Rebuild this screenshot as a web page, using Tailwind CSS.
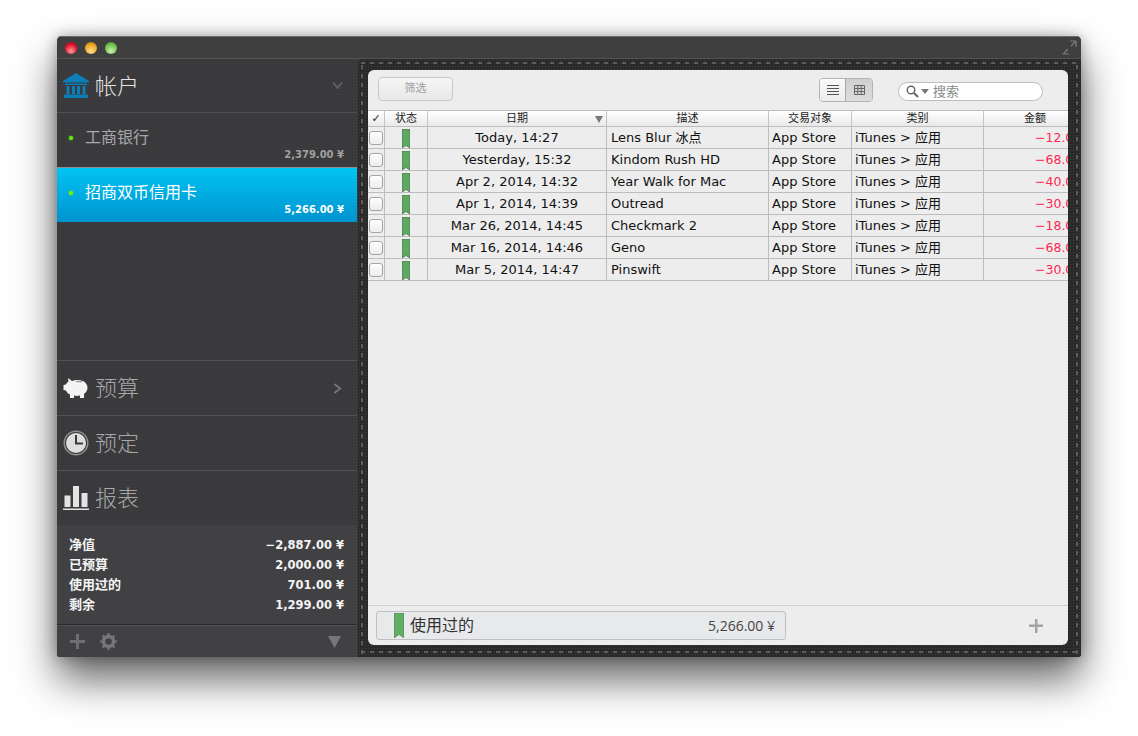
<!DOCTYPE html>
<html lang="zh">
<head>
  <meta charset="UTF-8">
  <title>帐户</title>
  <script src="https://cdn.jsdelivr.net/npm/@tailwindcss/browser@4"></script>
</head>
<body class="bg-white h-[736px] overflow-hidden font-['DejaVu_Sans','Noto_Sans_CJK_SC',sans-serif]">

  <!-- Window -->
  <div class="ml-[57px] mt-[36px] w-[1024px] h-[621px] rounded-t-[5px] rounded-b-[3px] bg-[#3b3b3d] flex flex-col overflow-hidden shadow-[0_22px_42px_rgba(0,0,0,0.62),0_0_14px_rgba(0,0,0,0.3)]">

    <!-- Title bar -->
    <div class="h-[23px] shrink-0 bg-[#3f3f3f] border-t border-[#6a6a6a] border-b border-b-[#545454] flex items-center pl-[8px] pr-[4px] gap-[8px]">
      <span class="w-[12px] h-[12px] rounded-full bg-[radial-gradient(circle_at_50%_75%,#ff9a9a,#e0102a_60%,#a00818)]"></span>
      <span class="w-[12px] h-[12px] rounded-full bg-[radial-gradient(circle_at_50%_75%,#ffe090,#eca422_60%,#b07408)]"></span>
      <span class="w-[12px] h-[12px] rounded-full bg-[radial-gradient(circle_at_50%_75%,#c8f0a8,#72c050_60%,#408a28)]"></span>
      <svg class="ml-auto" width="15" height="15" viewBox="0 0 15 15" fill="none" stroke="#7c7c7c" stroke-width="1.2">
        <path d="M1 14h6M1 14v-1M14 1H8M14 1v6M13.500 1.500L9 6M6 9l-4 4"/>
      </svg>
    </div>

    <div class="flex flex-1 min-h-0">

      <!-- Sidebar -->
      <aside class="w-[300px] shrink-0 flex flex-col bg-[repeating-linear-gradient(0deg,#39393c_0_1px,#3b3b3e_1px_3px)]">
        <div class="h-[54px] shrink-0 flex items-center pl-[6px] pr-[14px] border-b border-[#515153]">
          <svg width="26" height="25" viewBox="0 0 26 25" fill="#0d7fb8">
            <path d="M13 0L26 8v1.500H0V8zM2 10.500h22V12H2zM3.500 13h3v8h-3zM9 13h3v8H9zM14 13h3v8h-3zM19.500 13h3v8h-3zM1 21.500h24V25H1z"/>
          </svg>
          <span class="ml-[6px] mt-[3px] text-[22px] leading-[30px] font-light text-[#e4e4e4]">帐户</span>
          <svg class="ml-auto" width="11" height="9" viewBox="0 0 12 10" fill="none" stroke="#626265" stroke-width="2">
            <path d="M1 1.500L6 7.500 11 1.500"/>
          </svg>
        </div>

        <div class="h-[55px] shrink-0 flex flex-col pl-[12px] pr-[13px] border-b border-[#8a8f94]">
          <div class="flex items-center mt-[15px] h-[20px]">
            <span class="w-[4px] h-[4px] rounded-full bg-[#5cf000] shadow-[0_0_2px_#5cf000]"></span>
            <span class="ml-[12px] text-[16px] leading-[20px] text-[#a8a8a8]">工商银行</span>
          </div>
          <div class="text-right text-[10px] leading-[14px] font-bold text-[#a0a0a0]">2,379.00 ¥</div>
        </div>

        <div class="h-[54px] shrink-0 flex flex-col pl-[12px] pr-[13px] bg-gradient-to-b from-[#00c4f2] to-[#0093cf]">
          <div class="flex items-center mt-[15px] h-[20px]">
            <span class="w-[4px] h-[4px] rounded-full bg-[#7cf000] shadow-[0_0_2px_#7cf000]"></span>
            <span class="ml-[12px] text-[16px] leading-[20px] text-white">招商双币信用卡</span>
          </div>
          <div class="text-right text-[10px] leading-[14px] font-bold text-white">5,266.00 ¥</div>
        </div>

        <div class="flex-1 border-b border-[#515153]"></div>

        <div class="h-[55px] shrink-0 flex items-center pl-[6px] pr-[15px] border-b border-[#515153]">
          <svg width="26" height="22" viewBox="0 0 26 22" fill="#f4f4f4">
            <path d="M5 1l4 3c3-1.500 8-1.500 11 0 3 1.500 4.500 4 4.500 6.500 0 3-1.500 5-3.500 6.500V21h-4v-2.500c-2 .5-4 .5-6 0V21H7v-3.500C5 16.500 3.500 15 3 13.500L.5 13V8L3 7.500C3.500 6 4.500 5 5.500 4.500z"/>
            <path d="M13 4.500h6" stroke="#9a9a9a" stroke-width="1.500"/>
          </svg>
          <span class="ml-[6px] mt-[1px] text-[22px] leading-[30px] font-light text-[#a8a8a8]">预算</span>
          <svg class="ml-auto" width="9" height="11" viewBox="0 0 10 12" fill="none" stroke="#77777a" stroke-width="2">
            <path d="M1.500 1L8 6 1.500 11"/>
          </svg>
        </div>

        <div class="h-[55px] shrink-0 flex items-center pl-[6px] border-b border-[#515153]">
          <svg width="26" height="26" viewBox="0 0 26 26">
            <circle cx="13" cy="13" r="12.500" fill="#8e8e8e"/>
            <circle cx="13" cy="13" r="11" fill="#3c3c3e"/>
            <circle cx="13" cy="13" r="10" fill="#dedede"/>
            <path d="M13 5v8.500h7" fill="none" stroke="#3a3a3a" stroke-width="2"/>
          </svg>
          <span class="ml-[6px] mt-[1px] text-[22px] leading-[30px] font-light text-[#a8a8a8]">预定</span>
        </div>

        <div class="h-[54px] shrink-0 flex items-center pl-[6px]">
          <svg width="26" height="26" viewBox="0 0 26 26" fill="#e4e4e4">
            <path d="M1.500 10.500h6V22h-6zM10 1h6v21h-6zM18.500 8h6v14h-6zM0 23.500h26V25H0z"/>
          </svg>
          <span class="ml-[6px] mt-[1px] text-[22px] leading-[30px] font-light text-[#a8a8a8]">报表</span>
        </div>

        <!-- Summary -->
        <div class="h-[100px] shrink-0 bg-[#414144] pl-[12px] pr-[13px] pt-[10px] border-b border-[#29292b] text-[13px] font-bold text-[#f4f4f4] leading-[20px]">
          <div class="flex justify-between"><span>净值</span><span class="text-[11.500px]">−2,887.00 ¥</span></div>
          <div class="flex justify-between"><span>已预算</span><span class="text-[11.500px]">2,000.00 ¥</span></div>
          <div class="flex justify-between"><span>使用过的</span><span class="text-[11.500px]">701.00 ¥</span></div>
          <div class="flex justify-between"><span>剩余</span><span class="text-[11.500px]">1,299.00 ¥</span></div>
        </div>

        <!-- Sidebar footer -->
        <div class="h-[32px] shrink-0 bg-[#414144] border-t border-[#515153] flex items-center pl-[13px] pr-[16px]">
          <svg width="15" height="15" viewBox="0 0 15 15" fill="#6f6f72"><path d="M6 0h3v6h6v3H9v6H6V9H0V6h6z"/></svg>
          <svg class="ml-[15px]" width="17" height="17" viewBox="0 0 17 17">
            <circle cx="8.500" cy="8.500" r="5" fill="none" stroke="#77777a" stroke-width="3.500"/>
            <path d="M8.500 0v17M0 8.500h17M2.500 2.500l12 12M14.500 2.500l-12 12" stroke="#77777a" stroke-width="2.200" stroke-dasharray="3 11"/>
          </svg>
          <svg class="ml-auto" width="13" height="12" viewBox="0 0 13 12" fill="#77777a"><path d="M0 0h13L6.500 12z"/></svg>
        </div>
      </aside>

      <!-- Leather frame -->
      <main class="relative flex-1 ml-[1px] rounded-tl-[5px] p-[10px] pt-[11px] pr-[13px] pb-[12px] bg-[#29292a] bg-[radial-gradient(#414141_1px,transparent_1px)] bg-[length:3px_3px] flex flex-col min-w-0">
        <div class="absolute left-[3px] right-[3px] top-[3px] h-[2px] bg-[repeating-linear-gradient(90deg,#5c5c5c_0_4px,transparent_4px_9px)]"></div>
        <div class="absolute left-[3px] right-[3px] bottom-[4px] h-[2px] bg-[repeating-linear-gradient(90deg,#5c5c5c_0_4px,transparent_4px_9px)]"></div>
        <div class="absolute top-[3px] bottom-[3px] left-[3px] w-[2px] bg-[repeating-linear-gradient(0deg,#5c5c5c_0_4px,transparent_4px_9px)]"></div>
        <div class="absolute top-[3px] bottom-[3px] right-[3px] w-[2px] bg-[repeating-linear-gradient(0deg,#5c5c5c_0_4px,transparent_4px_9px)]"></div>

        <!-- Content panel -->
        <div class="flex-1 rounded-[6px] bg-[#ededed] flex flex-col overflow-hidden min-h-0">

          <!-- Toolbar -->
          <div class="h-[40px] shrink-0 flex items-center pl-[10px] pr-[25px]">
            <div class="w-[75px] h-[24px] -mt-[2px] rounded-[4px] border border-[#c8c8c8] bg-gradient-to-b from-[#f6f6f6] to-[#e8e8e8] flex items-center justify-center text-[11px] text-[#a0a0a0]">筛选</div>
            <div class="ml-auto flex h-[24px] w-[54px] rounded-[4px] border border-[#b4b4b4] overflow-hidden">
              <div class="w-[26px] bg-gradient-to-b from-[#fafafa] to-[#ececec] border-r border-[#a8a8a8] flex items-center justify-center">
                <svg width="12" height="10" viewBox="0 0 12 10" stroke="#555" stroke-width="1"><path d="M0 .5h12M0 3.500h12M0 6.500h12M0 9.500h12"/></svg>
              </div>
              <div class="flex-1 bg-gradient-to-b from-[#d0d0d0] to-[#dcdcdc] flex items-center justify-center">
                <svg width="11" height="10" viewBox="0 0 11 10" fill="none" stroke="#666" stroke-width="1"><path d="M.5.500h10v9H.5zM.5 3.500h10M.5 6.500h10M3.800.5v9M7.200.5v9"/></svg>
              </div>
            </div>
            <div class="ml-[25px] mt-[2px] w-[145px] h-[19px] rounded-full border border-[#bcbcbc] bg-white flex items-center pl-[7px]">
              <svg width="14" height="13" viewBox="0 0 14 13" fill="none" stroke="#666" stroke-width="1.400"><circle cx="5" cy="5" r="3.800"/><path d="M8 8l4 4" stroke-width="2"/></svg>
              <svg class="ml-[1px]" width="8" height="5" viewBox="0 0 8 5" fill="#777"><path d="M0 0h8L4 5z"/></svg>
              <span class="ml-[4px] mt-[1px] text-[13px] text-[#8a8a8a]">搜索</span>
            </div>
          </div>

          <!-- Table -->
          <div class="shrink-0 overflow-hidden text-[13px] text-[#111]">
            <div class="w-[730px]">
              <div class="grid grid-cols-[17px_43px_179px_162px_83px_132px_114px] h-[17px] border-t border-b border-[#bdbdbd] bg-gradient-to-b from-white to-[#e9e9e9] text-[11px] leading-[15px] text-center text-[#222]">
                <div class="border-r border-[#c4c4c4] font-bold">✓</div>
                <div class="border-r border-[#c4c4c4]">状态</div>
                <div class="relative border-r border-[#c4c4c4]">日期
                  <svg class="absolute right-[3px] top-[5px]" width="8" height="7" viewBox="0 0 8 7" fill="#777"><path d="M0 0h8L4 7z"/></svg>
                </div>
                <div class="border-r border-[#c4c4c4]">描述</div>
                <div class="border-r border-[#c4c4c4]">交易对象</div>
                <div class="border-r border-[#c4c4c4]">类别</div>
                <div class="text-left pl-[40px]">金额</div>
              </div>

              <div class="grid grid-cols-[17px_43px_179px_162px_83px_132px_114px] h-[22px] border-b border-[#bdbdbd] leading-[22px]">
                <div class="border-r border-[#bdbdbd] flex items-center pl-[1px]"><span class="w-[14px] h-[14px] rounded-[3px] border border-[#a4a4a4] bg-gradient-to-b from-white to-[#ececec]"></span></div>
                <div class="border-r border-[#bdbdbd] flex justify-center items-center"><svg width="8" height="19" viewBox="0 0 8 19"><path d="M0 0h8v19L4 16.500 0 19z" fill="#5fa861" stroke="#3f6f41" stroke-width=".7"/></svg></div>
                <div class="border-r border-[#bdbdbd] text-center">Today, 14:27</div>
                <div class="border-r border-[#bdbdbd] pl-[4px]">Lens Blur 冰点</div>
                <div class="border-r border-[#bdbdbd] pl-[3px]">App Store</div>
                <div class="border-r border-[#bdbdbd] pl-[3px]">iTunes &gt; 应用</div>
                <div class="pl-[51px] text-[12.500px] text-[#ff2850] whitespace-nowrap">−12.00 ¥</div>
              </div>
              <div class="grid grid-cols-[17px_43px_179px_162px_83px_132px_114px] h-[22px] border-b border-[#bdbdbd] leading-[22px]">
                <div class="border-r border-[#bdbdbd] flex items-center pl-[1px]"><span class="w-[14px] h-[14px] rounded-[3px] border border-[#a4a4a4] bg-gradient-to-b from-white to-[#ececec]"></span></div>
                <div class="border-r border-[#bdbdbd] flex justify-center items-center"><svg width="8" height="19" viewBox="0 0 8 19"><path d="M0 0h8v19L4 16.500 0 19z" fill="#5fa861" stroke="#3f6f41" stroke-width=".7"/></svg></div>
                <div class="border-r border-[#bdbdbd] text-center">Yesterday, 15:32</div>
                <div class="border-r border-[#bdbdbd] pl-[4px]">Kindom Rush HD</div>
                <div class="border-r border-[#bdbdbd] pl-[3px]">App Store</div>
                <div class="border-r border-[#bdbdbd] pl-[3px]">iTunes &gt; 应用</div>
                <div class="pl-[51px] text-[12.500px] text-[#ff2850] whitespace-nowrap">−68.00 ¥</div>
              </div>
              <div class="grid grid-cols-[17px_43px_179px_162px_83px_132px_114px] h-[22px] border-b border-[#bdbdbd] leading-[22px]">
                <div class="border-r border-[#bdbdbd] flex items-center pl-[1px]"><span class="w-[14px] h-[14px] rounded-[3px] border border-[#a4a4a4] bg-gradient-to-b from-white to-[#ececec]"></span></div>
                <div class="border-r border-[#bdbdbd] flex justify-center items-center"><svg width="8" height="19" viewBox="0 0 8 19"><path d="M0 0h8v19L4 16.500 0 19z" fill="#5fa861" stroke="#3f6f41" stroke-width=".7"/></svg></div>
                <div class="border-r border-[#bdbdbd] text-center">Apr 2, 2014, 14:32</div>
                <div class="border-r border-[#bdbdbd] pl-[4px]">Year Walk for Mac</div>
                <div class="border-r border-[#bdbdbd] pl-[3px]">App Store</div>
                <div class="border-r border-[#bdbdbd] pl-[3px]">iTunes &gt; 应用</div>
                <div class="pl-[51px] text-[12.500px] text-[#ff2850] whitespace-nowrap">−40.00 ¥</div>
              </div>
              <div class="grid grid-cols-[17px_43px_179px_162px_83px_132px_114px] h-[22px] border-b border-[#bdbdbd] leading-[22px]">
                <div class="border-r border-[#bdbdbd] flex items-center pl-[1px]"><span class="w-[14px] h-[14px] rounded-[3px] border border-[#a4a4a4] bg-gradient-to-b from-white to-[#ececec]"></span></div>
                <div class="border-r border-[#bdbdbd] flex justify-center items-center"><svg width="8" height="19" viewBox="0 0 8 19"><path d="M0 0h8v19L4 16.500 0 19z" fill="#5fa861" stroke="#3f6f41" stroke-width=".7"/></svg></div>
                <div class="border-r border-[#bdbdbd] text-center">Apr 1, 2014, 14:39</div>
                <div class="border-r border-[#bdbdbd] pl-[4px]">Outread</div>
                <div class="border-r border-[#bdbdbd] pl-[3px]">App Store</div>
                <div class="border-r border-[#bdbdbd] pl-[3px]">iTunes &gt; 应用</div>
                <div class="pl-[51px] text-[12.500px] text-[#ff2850] whitespace-nowrap">−30.00 ¥</div>
              </div>
              <div class="grid grid-cols-[17px_43px_179px_162px_83px_132px_114px] h-[22px] border-b border-[#bdbdbd] leading-[22px]">
                <div class="border-r border-[#bdbdbd] flex items-center pl-[1px]"><span class="w-[14px] h-[14px] rounded-[3px] border border-[#a4a4a4] bg-gradient-to-b from-white to-[#ececec]"></span></div>
                <div class="border-r border-[#bdbdbd] flex justify-center items-center"><svg width="8" height="19" viewBox="0 0 8 19"><path d="M0 0h8v19L4 16.500 0 19z" fill="#5fa861" stroke="#3f6f41" stroke-width=".7"/></svg></div>
                <div class="border-r border-[#bdbdbd] text-center">Mar 26, 2014, 14:45</div>
                <div class="border-r border-[#bdbdbd] pl-[4px]">Checkmark 2</div>
                <div class="border-r border-[#bdbdbd] pl-[3px]">App Store</div>
                <div class="border-r border-[#bdbdbd] pl-[3px]">iTunes &gt; 应用</div>
                <div class="pl-[51px] text-[12.500px] text-[#ff2850] whitespace-nowrap">−18.00 ¥</div>
              </div>
              <div class="grid grid-cols-[17px_43px_179px_162px_83px_132px_114px] h-[22px] border-b border-[#bdbdbd] leading-[22px]">
                <div class="border-r border-[#bdbdbd] flex items-center pl-[1px]"><span class="w-[14px] h-[14px] rounded-[3px] border border-[#a4a4a4] bg-gradient-to-b from-white to-[#ececec]"></span></div>
                <div class="border-r border-[#bdbdbd] flex justify-center items-center"><svg width="8" height="19" viewBox="0 0 8 19"><path d="M0 0h8v19L4 16.500 0 19z" fill="#5fa861" stroke="#3f6f41" stroke-width=".7"/></svg></div>
                <div class="border-r border-[#bdbdbd] text-center">Mar 16, 2014, 14:46</div>
                <div class="border-r border-[#bdbdbd] pl-[4px]">Geno</div>
                <div class="border-r border-[#bdbdbd] pl-[3px]">App Store</div>
                <div class="border-r border-[#bdbdbd] pl-[3px]">iTunes &gt; 应用</div>
                <div class="pl-[51px] text-[12.500px] text-[#ff2850] whitespace-nowrap">−68.00 ¥</div>
              </div>
              <div class="grid grid-cols-[17px_43px_179px_162px_83px_132px_114px] h-[22px] border-b border-[#bdbdbd] leading-[22px]">
                <div class="border-r border-[#bdbdbd] flex items-center pl-[1px]"><span class="w-[14px] h-[14px] rounded-[3px] border border-[#a4a4a4] bg-gradient-to-b from-white to-[#ececec]"></span></div>
                <div class="border-r border-[#bdbdbd] flex justify-center items-center"><svg width="8" height="19" viewBox="0 0 8 19"><path d="M0 0h8v19L4 16.500 0 19z" fill="#5fa861" stroke="#3f6f41" stroke-width=".7"/></svg></div>
                <div class="border-r border-[#bdbdbd] text-center">Mar 5, 2014, 14:47</div>
                <div class="border-r border-[#bdbdbd] pl-[4px]">Pinswift</div>
                <div class="border-r border-[#bdbdbd] pl-[3px]">App Store</div>
                <div class="border-r border-[#bdbdbd] pl-[3px]">iTunes &gt; 应用</div>
                <div class="pl-[51px] text-[12.500px] text-[#ff2850] whitespace-nowrap">−30.00 ¥</div>
              </div>
            </div>
          </div>

          <!-- Bottom bar -->
          <div class="mt-auto h-[40px] shrink-0 border-t border-[#cfcfcf] flex items-center pl-[8px] pr-[25px]">
            <div class="w-[410px] h-[29px] rounded-[3px] border border-[#c0c0c4] bg-[#e8e9eb] flex items-center pl-[17px] pr-[10px]">
              <svg width="10" height="25" viewBox="0 0 10 25"><path d="M0 0h10v25L5 21.500 0 25z" fill="#62ad64" stroke="#47784a" stroke-width=".6"/></svg>
              <span class="ml-[6px] text-[16px] text-[#333]">使用过的</span>
              <span class="ml-auto text-[14px] text-[#444] font-['Open_Sans',sans-serif]">5,266.00 ¥</span>
            </div>
            <svg class="ml-auto" width="14" height="14" viewBox="0 0 14 14" fill="#a4a4a4"><path d="M6 0h2.500v5.500H14V8H8.500v6H6V8H0V5.500h6z"/></svg>
          </div>
        </div>
      </main>
    </div>
  </div>

</body>
</html>
